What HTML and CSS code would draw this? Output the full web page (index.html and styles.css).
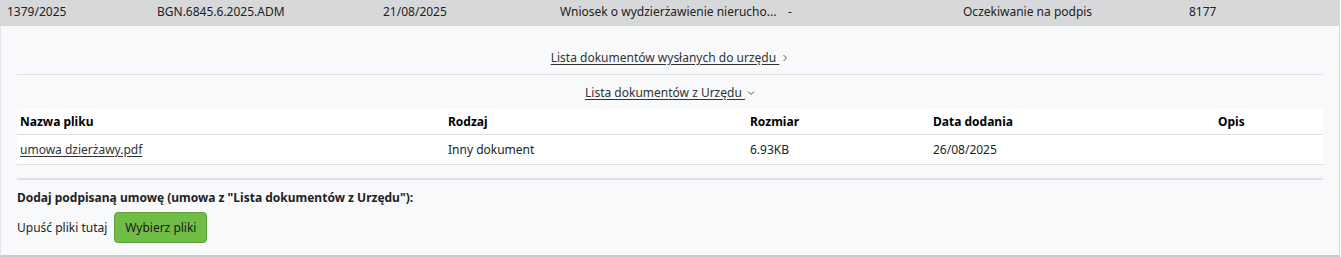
FILE: index.html
```html
<!DOCTYPE html>
<html lang="pl">
<head>
<meta charset="utf-8">
<title>Wniosek</title>
<link rel="stylesheet" href="styles.css">
</head>
<body>
<div class="wrap">
  <div class="summary">
    <span>1379/2025</span>
    <span>BGN.6845.6.2025.ADM</span>
    <span>21/08/2025</span>
    <span>Wniosek o wydzierżawienie nierucho...</span>
    <span>-</span>
    <span>Oczekiwanie na podpis</span>
    <span>8177</span>
  </div>
  <div class="panel">
    <div class="toggle first">
      <a class="tlink" href="#">Lista dokumentów wysłanych do urzędu&nbsp;</a>
      <svg class="chev" width="8" height="8" viewBox="0 0 8 8"><path d="M2.5 1 L5.5 4 L2.5 7" fill="none" stroke="#555" stroke-width="1"/></svg>
    </div>
    <div class="toggle">
      <a class="tlink" href="#">Lista dokumentów z Urzędu&nbsp;</a>
      <svg class="chev" width="8" height="8" viewBox="0 0 8 8"><path d="M1 2.5 L4 5.5 L7 2.5" fill="none" stroke="#555" stroke-width="1"/></svg>
    </div>
    <div class="table">
      <div class="tr head">
        <div class="c1">Nazwa pliku</div>
        <div class="c2">Rodzaj</div>
        <div class="c3">Rozmiar</div>
        <div class="c4">Data dodania</div>
        <div class="c5">Opis</div>
      </div>
      <div class="tr body">
        <div class="c1"><a class="flink" href="#">umowa dzierżawy.pdf</a></div>
        <div class="c2">Inny dokument</div>
        <div class="c3">6.93KB</div>
        <div class="c4">26/08/2025</div>
        <div class="c5"></div>
      </div>
    </div>
    <div class="upload">
      <div class="utitle">Dodaj podpisaną umowę (umowa z "Lista dokumentów z Urzędu"):</div>
      <div class="urow">
        <span>Upuść pliki tutaj</span>
        <button class="btn" type="button">Wybierz pliki</button>
      </div>
    </div>
  </div>
</div>
</body>
</html>
```

FILE: styles.css
```css
* { box-sizing: border-box; }
body {
  margin: 0;
  background: #ffffff;
  font-family: "Noto Sans", "Open Sans", sans-serif;
  font-size: 12px;
  color: #212529;
}
.wrap { width: 1340px; }
.summary {
  height: 26px;
  background: #d7d8da;
  display: grid;
  grid-template-columns: 150px 226px 177px 228px 175px 226px 151px;
  padding-left: 7px;
  padding-bottom: 4px;
  align-items: center;
  white-space: nowrap;
  color: #222;
}
.panel {
  background: #f8f9fb;
  border-left: 1px solid #e4e5e8;
  border-right: 1px solid #dcdde0;
  border-bottom: 2px solid #c8c9cb;
  padding: 14px 16px 12px;
}
.toggle {
  height: 34px;
  display: flex;
  align-items: center;
  justify-content: center;
}
.toggle.first { border-bottom: 1px solid #e1e2e6; height: 35px; }
.tlink {
  color: #333;
  text-decoration: underline;
  text-underline-offset: 2px;
}
.chev { margin-left: 2px; margin-top: 1px; }
.table { background: #ffffff; }
.tr {
  display: grid;
  grid-template-columns: 428px 302px 183px 285px 108px;
  padding-left: 3px;
  border-bottom: 1px solid #dee0e5;
  white-space: nowrap;
}
.head { height: 26px; align-items: center; font-weight: 700; color: #000; }
.body { height: 30px; align-items: center; }
.flink { color: #333; text-decoration: underline; text-underline-offset: 2px; }
.upload {
  margin-top: 13px;
  border-top: 2px solid #dfe0e6;
  padding-top: 8px;
}
.utitle { font-weight: 700; line-height: 19px; color: #222; }
.urow {
  margin-top: 5px;
  display: flex;
  align-items: center;
  gap: 7px;
}
.btn {
  font-family: inherit;
  font-size: 12px;
  color: #1b1b1b;
  background: #70bd46;
  border: 1px solid #5d9f38;
  border-radius: 4px;
  height: 31px;
  width: 93px;
  padding: 0;
}
```
